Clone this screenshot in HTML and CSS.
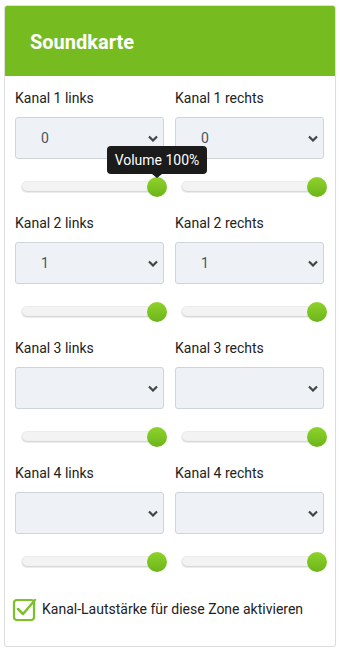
FILE: index.html
```html
<!DOCTYPE html>
<html lang="de">
<head>
<meta charset="utf-8">
<title>Soundkarte</title>
<link rel="stylesheet" href="styles.css">
</head>
<body>
<div class="card">
  <div class="card-header"><h2 class="title">Soundkarte</h2></div>
  <div class="card-body">
    <div class="grid">
      <div class="cell">
        <div class="label">Kanal 1 links</div>
        <div class="select"><span class="value">0</span><svg class="chev" viewBox="0 0 10 6"><path d="M1 1 L5 5 L9 1" /></svg></div>
        <div class="slider"><div class="track"></div><div class="thumb"></div>
          <div class="tooltip">Volume 100%</div></div>
      </div>
      <div class="cell">
        <div class="label">Kanal 1 rechts</div>
        <div class="select"><span class="value">0</span><svg class="chev" viewBox="0 0 10 6"><path d="M1 1 L5 5 L9 1" /></svg></div>
        <div class="slider"><div class="track"></div><div class="thumb"></div></div>
      </div>
      <div class="cell">
        <div class="label">Kanal 2 links</div>
        <div class="select"><span class="value">1</span><svg class="chev" viewBox="0 0 10 6"><path d="M1 1 L5 5 L9 1" /></svg></div>
        <div class="slider"><div class="track"></div><div class="thumb"></div></div>
      </div>
      <div class="cell">
        <div class="label">Kanal 2 rechts</div>
        <div class="select"><span class="value">1</span><svg class="chev" viewBox="0 0 10 6"><path d="M1 1 L5 5 L9 1" /></svg></div>
        <div class="slider"><div class="track"></div><div class="thumb"></div></div>
      </div>
      <div class="cell">
        <div class="label">Kanal 3 links</div>
        <div class="select"><span class="value"></span><svg class="chev" viewBox="0 0 10 6"><path d="M1 1 L5 5 L9 1" /></svg></div>
        <div class="slider"><div class="track"></div><div class="thumb"></div></div>
      </div>
      <div class="cell">
        <div class="label">Kanal 3 rechts</div>
        <div class="select"><span class="value"></span><svg class="chev" viewBox="0 0 10 6"><path d="M1 1 L5 5 L9 1" /></svg></div>
        <div class="slider"><div class="track"></div><div class="thumb"></div></div>
      </div>
      <div class="cell">
        <div class="label">Kanal 4 links</div>
        <div class="select"><span class="value"></span><svg class="chev" viewBox="0 0 10 6"><path d="M1 1 L5 5 L9 1" /></svg></div>
        <div class="slider"><div class="track"></div><div class="thumb"></div></div>
      </div>
      <div class="cell">
        <div class="label">Kanal 4 rechts</div>
        <div class="select"><span class="value"></span><svg class="chev" viewBox="0 0 10 6"><path d="M1 1 L5 5 L9 1" /></svg></div>
        <div class="slider"><div class="track"></div><div class="thumb"></div></div>
      </div>
    </div>
    <label class="check">
      <svg class="box" viewBox="0 0 26 26"><rect x="2" y="4" width="20" height="20" rx="3"/><path class="mark" d="M6 13 L11 18 L23 4"/></svg>
      <span>Kanal-Lautstärke für diese Zone aktivieren</span>
    </label>
  </div>
</div>
</body>
</html>
```
FILE: styles.css
```css
* { box-sizing: border-box; }
body {
  margin: 0;
  padding: 5px 5px 0 4px;
  background: #fff;
  font-family: Roboto, "Liberation Sans", Arial, sans-serif;
  color: #222;
}
.card {
  width: 332px;
  border: 1px solid #dedede;
  border-radius: 3px;
  background: #fff;
  box-shadow: 0 1px 1px rgba(0,0,0,0.05);
}
.card-header {
  background: #76bc21;
  height: 70px;
  display: flex;
  align-items: center;
  padding-left: 25px;
  border-radius: 2px 2px 0 0;
}
.title {
  margin: 0;
  color: #fff;
  font-size: 20px;
  font-weight: 700;
  padding-top: 1px;
}
.card-body {
  padding: 12px 10px 24px 10px;
}
.grid {
  display: grid;
  grid-template-columns: 149px 149px;
  column-gap: 11px;
}
.cell {
  display: flex;
  flex-direction: column;
  padding-bottom: 16px;
}
.label {
  font-size: 14px;
  line-height: 20px;
  color: #222;
}
.select {
  margin-top: 9px;
  height: 42px;
  background: #eef1f5;
  border: 1px solid #cfd4da;
  border-radius: 3px;
  display: flex;
  align-items: center;
  padding-left: 25px;
  padding-right: 5px;
}
.value {
  flex: 1;
  font-size: 14px;
  color: #4a5560;
}
.chev {
  width: 10px;
  height: 7px;
  fill: none;
  stroke: #444;
  stroke-width: 2.2;
}
.slider {
  margin-top: 18px;
  height: 20px;
  position: relative;
  display: flex;
  align-items: center;
  padding-left: 7px;
}
.track {
  width: 138px;
  height: 10px;
  background: #f3f3f3;
  border-radius: 5px;
  box-shadow: inset 0 -1px 1px rgba(0,0,0,0.12), 0 0 0 1px #ebebeb;
}
.thumb {
  position: absolute;
  left: 132px;
  top: 0;
  width: 20px;
  height: 20px;
  border-radius: 50%;
  background: linear-gradient(#8ed32a, #6db41b);
}
.tooltip {
  position: absolute;
  z-index: 10;
  left: 92px;
  top: -31px;
  width: 100px;
  height: 28px;
  background: #1b1b1b;
  color: #fff;
  font-size: 14px;
  border-radius: 4px;
  display: flex;
  align-items: center;
  justify-content: center;
}
.tooltip::after {
  content: "";
  position: absolute;
  left: 45px;
  bottom: -4px;
  border-left: 5px solid transparent;
  border-right: 5px solid transparent;
  border-top: 4px solid #1b1b1b;
}
.check {
  display: flex;
  align-items: center;
  gap: 4px;
  margin-top: 8px;
  margin-left: -3px;
  font-size: 14px;
  color: #222;
}
.box {
  width: 26px;
  height: 26px;
  fill: none;
  stroke: #7cc12a;
  stroke-width: 2.2;
}
.mark {
  stroke-width: 2.5;
  stroke-linecap: round;
  stroke-linejoin: round;
}
```
